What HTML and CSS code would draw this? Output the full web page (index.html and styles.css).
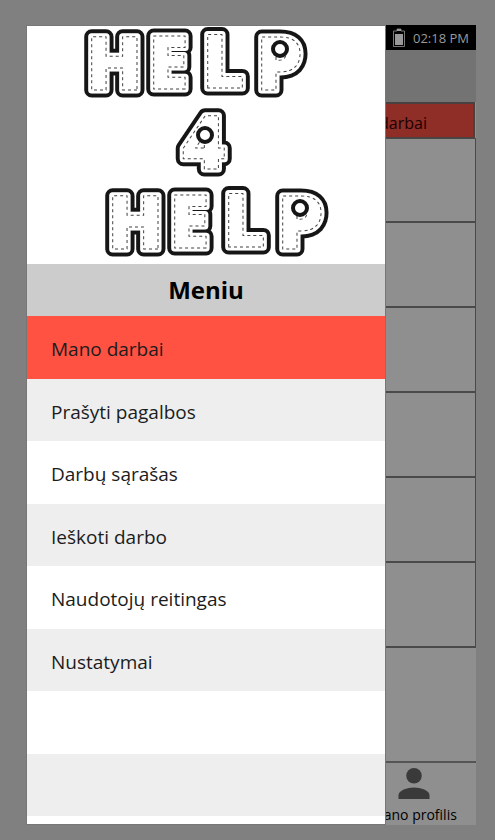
FILE: index.html
```html
<!DOCTYPE html>
<html lang="lt">
<head>
<meta charset="utf-8">
<meta name="viewport" content="width=device-width, initial-scale=1">
<title>Help 4 Help</title>
<link rel="stylesheet" href="styles.css">
</head>
<body>
<div class="phone">
  <header class="status">
    <svg class="battery" viewBox="0 0 14 20" aria-hidden="true">
      <path d="M5 3V1h4v2h3.500v15.500h-11V3z" fill="none" stroke="#777" stroke-width="1"/>
      <path d="M5 1h4v2H5zM3 6h8v11H3z" fill="#999"/>
    </svg>
    <time>02:18 PM</time>
  </header>
  <div class="appbar"></div>
  <div class="tabs"><button class="tab" type="button">Mano darbai</button></div>
  <main class="jobs">
    <div class="job"></div>
    <div class="job"></div>
    <div class="job"></div>
    <div class="job"></div>
    <div class="job"></div>
    <div class="job"></div>
  </main>
  <footer class="bottom">
    <a class="profile" href="#profilis">
      <svg class="person" viewBox="0 0 32 32" aria-hidden="true">
        <circle cx="16" cy="8" r="8"/>
        <path d="M0 32v-4c0-5 9-8 16-8s16 3 16 8v4z"/>
      </svg>
      <span>Mano profilis</span>
    </a>
  </footer>

  <aside class="drawer">
    <svg class="logo" viewBox="0 0 358 238" role="img" aria-label="Help 4 Help">
      <defs>
        <filter id="soft"><feGaussianBlur stdDeviation="0.6"/></filter>
        <g id="letters">
          <text x="59" y="64">H</text><text x="121" y="63">E</text><text x="175" y="62">L</text><text x="229" y="64">P</text>
          <text x="155" y="143">4</text>
          <text x="80" y="223">H</text><text x="142" y="222">E</text><text x="196" y="221">L</text><text x="250" y="223">P</text>
        </g>
      </defs>
      <g filter="url(#soft)">
        <use href="#letters" class="outline"/>
        <use href="#letters" class="body"/>
        <use href="#letters" class="stitch"/>
        <g class="hole">
          <circle cx="253" cy="23" r="7"/>
          <circle cx="178" cy="109" r="7"/>
          <circle cx="273" cy="182" r="7"/>
        </g>
      </g>
    </svg>
    <h1 class="title">Meniu</h1>
    <nav class="menu">
      <a class="item active" href="#mano-darbai">Mano darbai</a>
      <a class="item" href="#pagalba">Prašyti pagalbos</a>
      <a class="item" href="#sarasas">Darbų sąrašas</a>
      <a class="item" href="#ieskoti">Ieškoti darbo</a>
      <a class="item" href="#reitingas">Naudotojų reitingas</a>
      <a class="item" href="#nustatymai">Nustatymai</a>
      <div class="item"></div>
      <div class="item"></div>
    </nav>
  </aside>
</div>
</body>
</html>
```
FILE: styles.css
```css
* { box-sizing: border-box; }

body {
  margin: 0;
  min-height: 100vh;
  display: flex;
  padding: 25px 19px 15px 26px;
  background: #808080;
  color: #000;
  font-family: "Open Sans", "Noto Sans", sans-serif;
}

a { color: inherit; text-decoration: none; }

.phone {
  position: relative;
  flex: 1;
  display: flex;
  flex-direction: column;
  background: #8f8f8f;
}

.status {
  display: flex;
  align-items: center;
  justify-content: flex-end;
  gap: 7px;
  height: 25px;
  padding-right: 7px;
  background: #000;
  color: #999;
  font-size: 13px;
}
.battery { width: 14px; height: 20px; }

.appbar { height: 52px; background: #737373; }

.tabs {
  display: flex;
  justify-content: flex-end;
  height: 36px;
  padding-right: 1px;
}
.tab {
  width: 50%;
  padding: 4px 46px 0 0;
  border: 2px solid #4b4040;
  border-bottom-width: 1px;
  background: #8f2d27;
  color: #1a0000;
  font: inherit;
  font-size: 16px;
  text-align: right;
}

.jobs { flex: 1; }
.job {
  height: 85px;
  border: 1px solid #4a4a4a;
  border-top-width: 0;
  border-bottom-width: 2px;
}
.job:first-child { border-top-width: 1px; }

.bottom {
  display: flex;
  justify-content: flex-end;
  height: 64px;
  border-top: 2px solid #555;
}
.profile {
  display: flex;
  flex-direction: column;
  align-items: center;
  gap: 6px;
  width: 124px;
  padding-top: 5px;
  font-size: 14px;
  line-height: 20px;
}
.person { width: 32px; height: 32px; fill: #3a3a3a; }

.drawer {
  position: absolute;
  inset: 0 auto 0 0;
  width: 80%;
  display: flex;
  flex-direction: column;
  border: 1px solid #777;
  background: #fff;
}

.logo {
  display: block;
  width: 100%;
  font-family: "Open Sans", sans-serif;
  font-size: 74px;
  font-weight: 800;
  stroke-linejoin: round;
}
.outline { fill: #161616; stroke: #161616; stroke-width: 15px; }
.body { fill: #fff; stroke: #fff; stroke-width: 7px; }
.stitch { fill: none; stroke: #444; stroke-width: 1px; stroke-dasharray: 3 3; }
.hole { fill: #fff; stroke: #161616; stroke-width: 4px; }

.title {
  margin: 0;
  background: #ccc;
  font-size: 24px;
  line-height: 52px;
  text-align: center;
}

.menu {
  flex: 1;
  display: grid;
  grid-template-rows: repeat(8, 1fr);
  padding-bottom: 8px;
}
.item {
  display: flex;
  align-items: center;
  padding: 4px 24px 0;
  color: #1c1c1c;
  font-size: 19px;
}
.item:nth-child(even) { background: #eee; }
.item.active { background: #ff5243; }
```
